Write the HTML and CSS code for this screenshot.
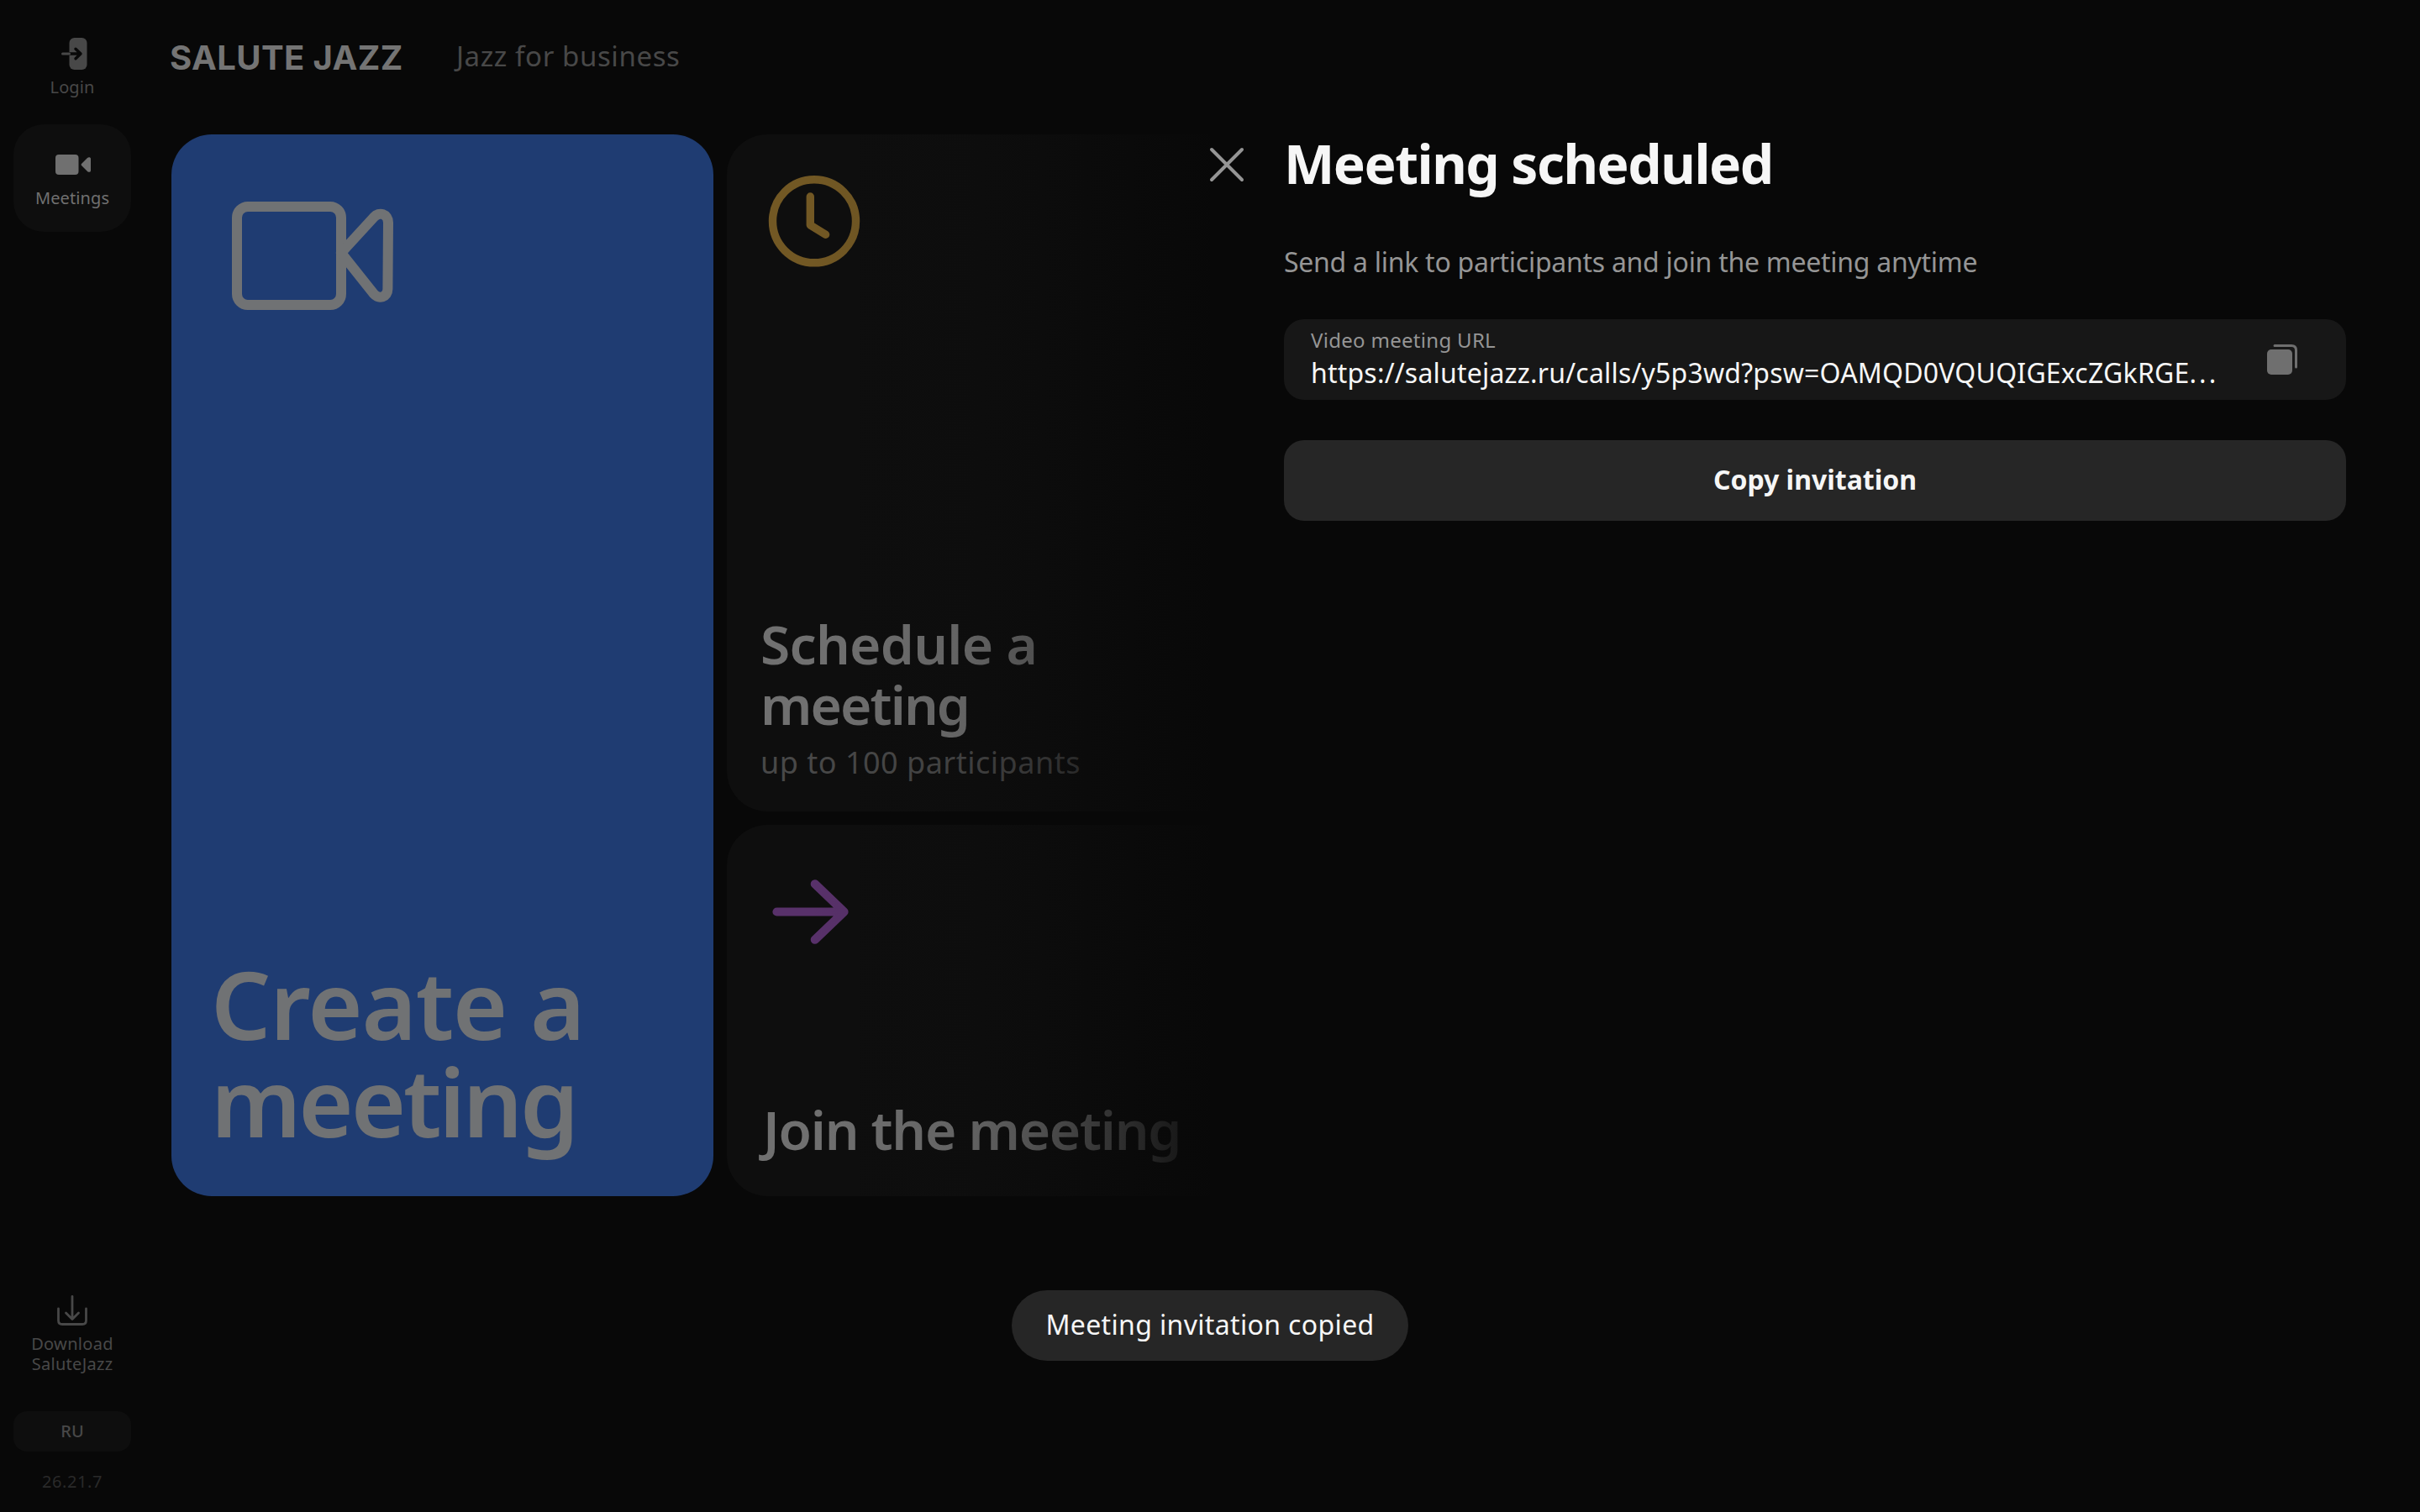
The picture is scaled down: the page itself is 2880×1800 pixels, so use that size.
FILE: index.html
```
<!DOCTYPE html>
<html lang="en">
<head>
  <meta charset="UTF-8">
  <title>SaluteJazz</title>
  <link rel="stylesheet" href="styles.css">
</head>
<body>
  <div class="app">
    <nav class="sidebar">
      <a class="nav-item">
        <svg class="nav-icon" viewBox="0 0 48 48"><rect x="20.500" y="5" width="21" height="38" rx="6" fill="#484848"/><path d="M20.500 24H34M28 18.200L34 24l-6 5.800" fill="none" stroke="#080808" stroke-width="3.400" stroke-linecap="round" stroke-linejoin="round"/><path d="M12.500 24h8" stroke="#484848" stroke-width="3" stroke-linecap="round"/></svg>
        <span class="nav-label">Login</span>
      </a>
      <a class="nav-item active">
        <svg class="nav-icon" viewBox="0 0 48 48" fill="#707070"><rect x="4" y="12" width="27.500" height="24" rx="4"/><path d="M35 23l7-7c1.500-1.500 4-1 4 1v14c0 2-2.500 2.500-4 1l-7-7q-1-1 0-2z"/></svg>
        <span class="nav-label">Meetings</span>
      </a>
      <div class="nav-bottom">
        <a class="nav-item download">
          <svg class="nav-icon" viewBox="0 0 48 48" fill="none" stroke="#484848" stroke-width="2.800" stroke-linecap="round" stroke-linejoin="round"><path d="M24 7.500V34M16.500 27l7.500 7.500 7.500-7.500M7.500 22v14q0 4.500 4.500 4.500h24q4.500 0 4.500-4.500V22"/></svg>
          <span class="nav-label">Download<br>SaluteJazz</span>
        </a>
        <button class="lang">RU</button>
        <div class="version">26.21.7</div>
      </div>
    </nav>
    <main class="main">
      <header class="header">
        <span class="logo">SALUTE JAZZ</span>
        <a class="business">Jazz for business</a>
      </header>
      <section class="cards">
        <div class="card create">
          <svg class="create-icon" viewBox="0 0 192 129" fill="none" stroke="#707274" stroke-width="12" stroke-linejoin="round"><rect x="6" y="6" width="124" height="117" rx="13"/><path d="M130 61L169 18.500c6-7 17-4 17 6.500l-.6 79c0 10-10.400 12.500-16.400 6z"/></svg>
          <h2>Create a<br>meeting</h2>
        </div>
        <div class="card schedule">
          <svg class="card-icon" viewBox="0 0 112 112" fill="none" stroke="#725824" stroke-width="9.400" stroke-linecap="round" stroke-linejoin="round"><circle cx="56" cy="55.300" r="49.500"/><path d="M51.300 26v34l18.300 11.300"/></svg>
          <h3>Schedule a<br>meeting</h3>
          <p>up to 100 participants</p>
        </div>
        <div class="card join">
          <svg class="card-icon" viewBox="0 0 112 112" fill="none" stroke="#58316a" stroke-width="10.200" stroke-linecap="round" stroke-linejoin="round"><path d="M11.500 55.500H91M56.800 22.300L91.500 55.500 56.800 88.700"/></svg>
          <h3>Join the meeting</h3>
        </div>
      </section>
    </main>
  </div>
  <aside class="drawer">
    <div class="drawer-head">
      <svg class="close" viewBox="0 0 48 48" stroke="#959595" stroke-width="4" stroke-linecap="round"><path d="M6 6l36 36M42 6L6 42"/></svg>
      <h1>Meeting scheduled</h1>
    </div>
    <div class="drawer-body">
      <p class="hint">Send a link to participants and join the meeting anytime</p>
      <div class="url-field">
        <div class="url-text">
          <label>Video meeting URL</label>
          <div class="url">https://salutejazz.ru/calls/y5p3wd?psw=OAMQD0VQUQIGExcZGkRGE<span class="dots">...</span></div>
        </div>
        <svg class="copy-icon" viewBox="0 0 48 48"><rect x="6" y="12" width="30" height="30" rx="5" fill="#6f6f6f"/><path d="M15 7.500h20q5.500 0 5.500 5.500v20" fill="none" stroke="#6f6f6f" stroke-width="3" stroke-linecap="round"/></svg>
      </div>
      <button class="copy-btn">Copy invitation</button>
    </div>
  </aside>
  <div class="toast">Meeting invitation copied</div>
</body>
</html>
```
FILE: styles.css
```
* { box-sizing: border-box; }
body { margin: 0; width: 2880px; height: 1800px; overflow: hidden; background: #080808; font-family: "Noto Sans", sans-serif; position: relative; }
h1, h2, h3, p { margin: 0; }
button { border: none; font-family: inherit; padding: 0; }
svg { display: block; flex: none; }
.app { display: flex; height: 100%; }

.sidebar { width: 172px; padding: 16px 16px 24px; display: flex; flex-direction: column; gap: 4px; }
.nav-item { height: 128px; padding-top: 24px; border-radius: 36px; display: flex; flex-direction: column; align-items: center; gap: 4px; color: #484848; text-align: center; }
.nav-item.active { background: #0e0e0e; color: #707070; }
.nav-icon { width: 48px; height: 48px; }
.nav-label { font-size: 20px; line-height: 24px; letter-spacing: .1px; }
.nav-bottom { margin-top: auto; display: flex; flex-direction: column; }
.nav-item.download { height: auto; padding-top: 0; border-radius: 0; }
.download .nav-label { letter-spacing: .3px; }
.lang { margin-top: 44px; height: 48px; border-radius: 16px; background: #0e0e0e; color: #484848; font-size: 20px; line-height: 48px; font-weight: 500; }
.version { margin-top: 24px; font-size: 20px; line-height: 24px; letter-spacing: .6px; text-align: center; color: #2a2a2a; }

.main { padding: 39px 0 0 32px; }
.header { height: 56px; display: flex; align-items: center; line-height: 56px; }
.logo { width: 341px; margin-left: -2px; padding-top: 3px; font-family: "Inter", sans-serif; font-size: 40px; font-weight: 700; letter-spacing: .4px; color: #747474; }
.business { font-size: 33px; letter-spacing: .6px; color: #484848; }
.cards { margin-top: 65px; display: grid; grid-template-columns: 645px 645px; grid-template-rows: 806px 442px; gap: 16px; }
.card { border-radius: 48px; background: #0e0e0e; display: flex; flex-direction: column; padding: 48px 36px 38px 37px; }
.card h3 { margin-top: auto; margin-left: 3px; font-size: 64px; line-height: 72px; font-weight: 600; letter-spacing: -1.9px; color: #707070; }
.card h3::first-line { letter-spacing: -.7px; }
.card p { margin-top: 13px; margin-left: 3px; font-size: 36px; line-height: 40px; letter-spacing: .5px; color: #484848; }
.card-icon { width: 112px; height: 112px; margin-left: 11px; }
.create { grid-row: 1 / 3; background: #1f3c72; padding: 80px 45px 55px; }
.create-icon { width: 192px; height: 129px; margin-left: 27px; }
.create h2 { margin-top: auto; margin-left: 2px; font-size: 112px; line-height: 116px; font-weight: 600; letter-spacing: -3.2px; color: #707274; }
.create h2::first-line { letter-spacing: -1.3px; }
.join { padding-bottom: 43px; }
.join h3 { margin-left: 6px; }
.join h3::first-line { letter-spacing: -1.25px; }

/* drawer fades the page out towards its left edge */
.drawer { position: absolute; top: 0; left: 960px; right: 0; bottom: 0; padding: 155px 88px 0 476px; background: linear-gradient(90deg, rgba(8,8,8,0) 0, rgba(8,8,8,.05) 92px, rgba(8,8,8,.13) 190px, rgba(8,8,8,.3) 270px, rgba(8,8,8,.52) 340px, rgba(8,8,8,.68) 390px, rgba(8,8,8,.79) 425px, rgba(8,8,8,.92) 479px, #080808 480px); }
.drawer-head { display: flex; gap: 44px; }
.drawer-head h1 { font-size: 64px; line-height: 80px; font-weight: 700; letter-spacing: -1.5px; color: #f6f6f6; }
.close { width: 48px; height: 48px; margin-top: 17px; }
.drawer-body { margin-left: 92px; }
.hint { margin-top: 55px; font-size: 32px; line-height: 44px; letter-spacing: -.27px; color: #959595; }
.url-field { margin-top: 46px; height: 96px; border-radius: 24px; background: #171717; padding: 11px 52px 0 32px; display: flex; justify-content: space-between; }
.url-field label { display: block; font-size: 24px; line-height: 28px; letter-spacing: .3px; color: #959595; }
.url { margin-top: 5px; font-size: 32px; line-height: 40px; letter-spacing: .2px; color: #f6f6f6; white-space: nowrap; }
.dots { letter-spacing: 3px; }
.copy-icon { width: 48px; height: 48px; margin-top: 13px; }
.copy-btn { display: block; width: 100%; height: 96px; margin-top: 48px; padding-bottom: 3px; border-radius: 24px; background: #262626; color: #f6f6f6; font-size: 32px; font-weight: 700; line-height: 92px; }
.toast { position: absolute; left: 1204px; top: 1536px; width: 472px; height: 84px; border-radius: 42px; background: #262626; color: #f6f6f6; font-size: 32px; line-height: 82px; letter-spacing: .35px; text-align: center; }
```
